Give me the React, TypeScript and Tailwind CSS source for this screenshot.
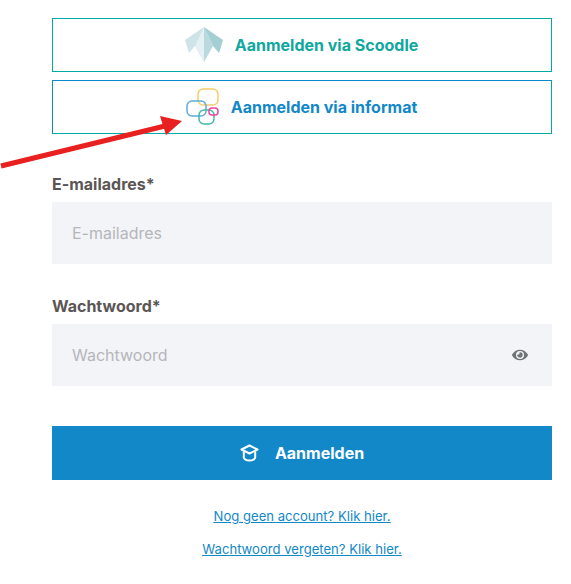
import { FaEye } from "react-icons/fa";

function ScoodleLogo() {
  return (
    <svg width="40" height="36" viewBox="0 0 40 36" className="shrink-0">
      <polygon points="20,0 1,13 5,26 11,19 20,35" fill="#cfe4e8" />
      <polygon points="20,0 11,19 20,35" fill="#e4f0f3" />
      <polygon points="20,0 29,19 20,35" fill="#b9d9de" />
      <polygon points="20,0 39,13 35,26 29,19" fill="#a3cfd3" />
    </svg>
  );
}

function InformatLogo() {
  return (
    <svg width="34" height="38" viewBox="0 0 34 38" fill="none" className="shrink-0">
      <rect x="13" y="1" width="20" height="16" rx="5" stroke="#f6cd6b" strokeWidth="1.5" />
      <rect x="2" y="13" width="19" height="15" rx="5" stroke="#5dadd9" strokeWidth="1.5" />
      <rect x="14" y="22" width="15" height="14" rx="5" stroke="#45b8ac" strokeWidth="1.5" />
      <rect x="24" y="20" width="9" height="7" rx="3" stroke="#e8489e" strokeWidth="1.5" />
    </svg>
  );
}

function CapIcon() {
  return (
    <svg width="19" height="18" viewBox="0 0 19 18" fill="none" stroke="white" strokeWidth="2" strokeLinejoin="round" className="shrink-0">
      <path d="M9.5 1.5 1.5 5.5 9.5 9.5 17.5 5.5Z" />
      <path d="M3.8 7.5V13.5c0 1.4 2.6 3 5.7 3s5.7-1.6 5.7-3V7.5" />
    </svg>
  );
}

export default function App() {
  return (
    <div className="relative h-[584px] w-[571px] overflow-hidden bg-white font-['Inter',sans-serif]">
      <svg width="190" height="60" viewBox="0 0 190 60" className="absolute left-0 top-[115px] z-10">
        <line x1="1" y1="51" x2="165" y2="11" stroke="#e8201f" strokeWidth="5" />
        <polygon points="160,1 182,6 166,20" fill="#e8201f" />
      </svg>

      <div className="flex flex-col px-[52px] pt-[18px] pr-[19px]">
        <a className="flex h-[54px] items-center justify-center gap-[11px] border border-[#00aaa5] pr-[2px] text-[16px] font-bold text-[#0fa89e]">
          <ScoodleLogo />
          <span>Aanmelden via Scoodle</span>
        </a>
        <a className="mt-2 flex h-[54px] items-center justify-center gap-[12px] border border-[#1089c9] border-b-[#00aaa5] border-r-[#00aaa5] pr-[2px] text-[16px] font-bold text-[#1288c9]">
          <InformatLogo />
          <span>Aanmelden via informat</span>
        </a>

        <label className="mt-[40px] h-[20px] text-[16px] leading-[20px] font-bold text-[#5a5655]">E-mailadres*</label>
        <div className="mt-[8px] flex h-[62px] items-center bg-[#f3f4f8] px-[20px] text-[16px] text-[#b5b6ba]">E-mailadres</div>

        <label className="mt-[32px] h-[20px] text-[16px] leading-[20px] font-bold text-[#5a5655]">Wachtwoord*</label>
        <div className="mt-[8px] flex h-[62px] items-center justify-between bg-[#f3f4f8] pl-[20px] pr-[24px] text-[16px] text-[#b5b6ba]">
          <span>Wachtwoord</span>
          <FaEye size={16} className="text-[#6f7478]" />
        </div>

        <button className="mt-[40px] flex h-[54px] items-center justify-center gap-[16px] bg-[#1288c9] text-[16px] font-bold text-white">
          <CapIcon />
          <span>Aanmelden</span>
        </button>

        <div className="mt-[27px] flex flex-col items-center gap-[14px] text-[13.1px] leading-[19px] text-[#1288c9] underline">
          <a>Nog geen account? Klik hier.</a>
          <a>Wachtwoord vergeten? Klik hier.</a>
        </div>
      </div>
    </div>
  );
}
